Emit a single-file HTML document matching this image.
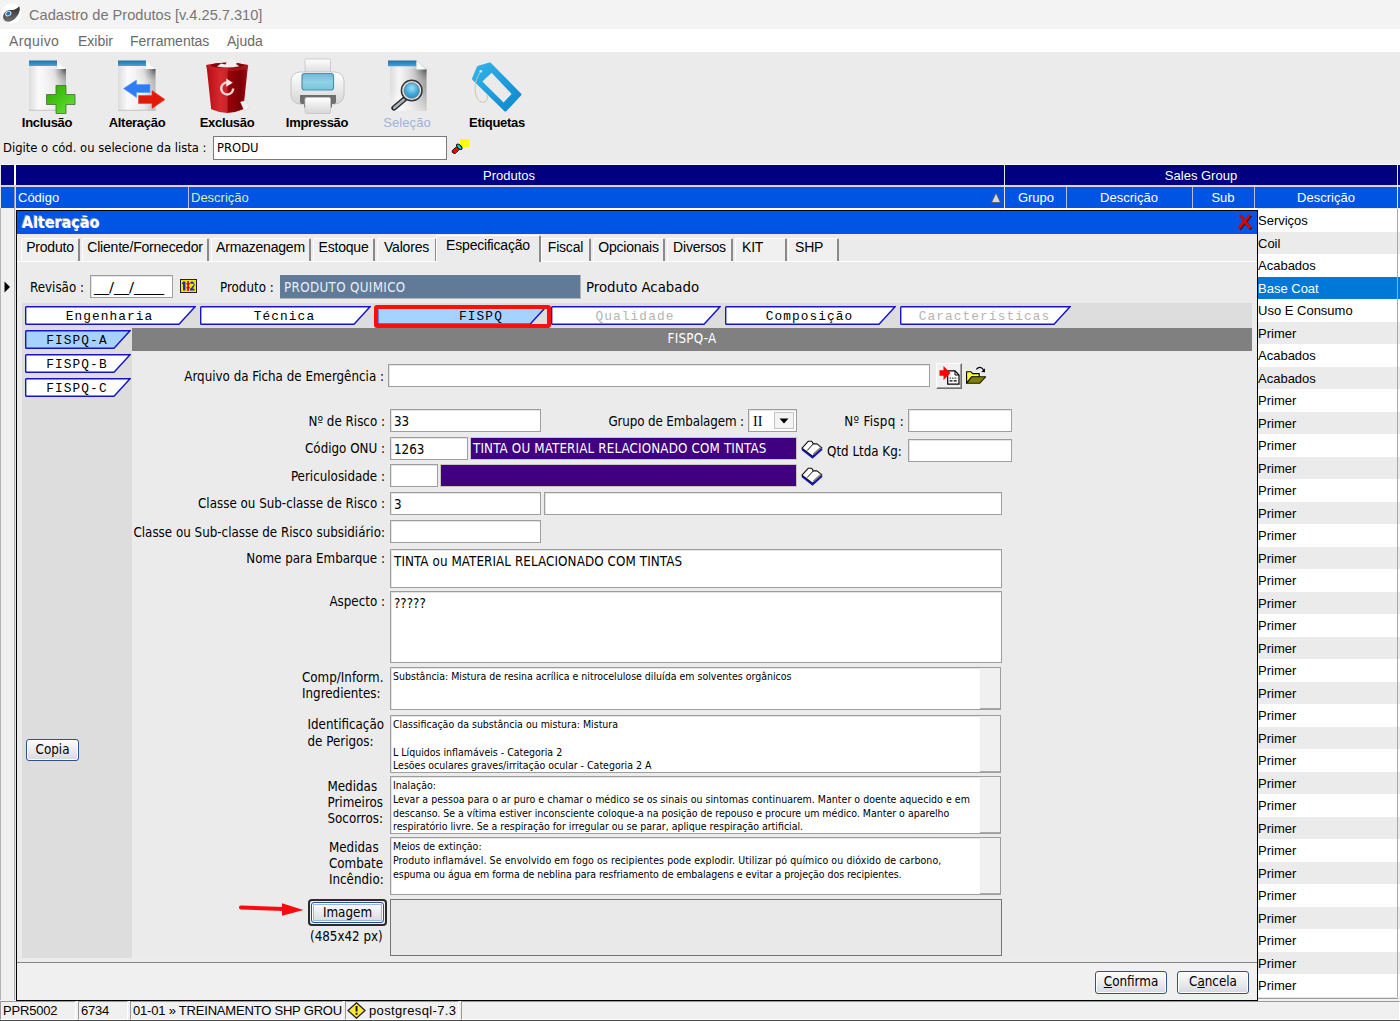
<!DOCTYPE html>
<html lang="pt-BR">
<head>
<meta charset="utf-8">
<title>Cadastro de Produtos</title>
<style>
*{box-sizing:border-box;margin:0;padding:0}
html,body{width:1400px;height:1021px;overflow:hidden;background:#ebebeb}
body{position:relative;font-family:"Liberation Sans",sans-serif;font-size:14px;color:#000}
.a{position:absolute;white-space:nowrap}
.th{font-family:"DejaVu Sans Condensed","DejaVu Sans","Liberation Sans",sans-serif;font-stretch:condensed;font-size:12.9px}
/* title + menu */
#title{left:0;top:0;width:1400px;height:29px;background:#f3f3f3}
#title span{left:29px;top:6px;font-size:14.6px;color:#767676;line-height:19px}
#menu{left:0;top:29px;width:1400px;height:23px;background:#fff}
#menu span{top:3px;font-size:14px;color:#6a6a6a;line-height:19px}
/* toolbar */
#tb{left:0;top:52px;width:1400px;height:113px;background:#ebebeb}
.tl{top:63px;font-weight:bold;font-size:13px;line-height:16px;transform:translateX(-50%);letter-spacing:-0.3px}
/* grid */
.nav{background:#000080;color:#fff}
.blu{background:#0054e3;color:#fff}
.gh{font-size:13px;line-height:16px;color:#fff}
.row{left:1258px;width:142px;height:23px;font-size:13px;line-height:24px;padding-left:0}
#dlg{left:16px;top:210px;width:1242px;height:791px;background:#ebebeb;border:1px solid #000}
.tf{font-family:"DejaVu Sans Condensed","DejaVu Sans","Liberation Sans",sans-serif;font-stretch:condensed}
#dlgi{left:1px;top:0;width:1239px;height:789px}
.tab{top:27px;height:23px;font-size:14px;line-height:16px;text-align:center;background:#f0f0f0;border-left:1px solid #fff;border-top:1px solid #fff;border-right:2px solid #8a8a8a;border-radius:2px 2px 0 0;letter-spacing:-0.2px}
.tab.sel{top:24px;height:27px;line-height:18px;background:#ebebeb;z-index:2}
.mt{font-family:"Liberation Mono","DejaVu Sans Mono",monospace;font-size:13px;line-height:16px;text-align:center;color:#000}
.lb{font-family:"DejaVu Sans Condensed","DejaVu Sans","Liberation Sans",sans-serif;font-stretch:condensed;font-size:13.25px;line-height:16px;text-align:right;margin-top:1px;margin-right:1px}
.in{background:#fff;border:1px solid #9e9e9e;box-shadow:inset 1px 1px 0 #e4e4e4;font-family:"DejaVu Sans Condensed","DejaVu Sans","Liberation Sans",sans-serif;font-stretch:condensed;font-size:13.3px;line-height:16px;padding:4px 0 0 3px;overflow:hidden}
.ta{font-size:10.5px;line-height:13.8px;padding:2px 0 0 2px;white-space:pre}
.sb{right:0;top:0;bottom:0;width:20px;background:#f0f0f0;border-bottom:1px solid #a8a8a8}
.btn{border:1px solid #2f528f;border-radius:3px;background:linear-gradient(#fdfdfd,#e9eaee 55%,#d6d9e2);font-family:"DejaVu Sans Condensed","DejaVu Sans","Liberation Sans",sans-serif;font-stretch:condensed;font-size:13.3px;line-height:19px;text-align:center;box-shadow:inset 0 0 0 1px #fff}
</style>
</head>
<body>
<!-- TITLE BAR -->
<div id="title" class="a">
<svg class="a" style="left:0;top:0" width="26" height="29" viewBox="0 0 26 29"><defs><linearGradient id="sw" x1="0" y1="0" x2="0" y2="1"><stop offset="0" stop-color="#2e2e2e"/><stop offset="1" stop-color="#707070"/></linearGradient></defs><ellipse cx="11.5" cy="13.5" rx="9.6" ry="10.2" fill="#fff"/><path d="M3.2 18 C2.4 13.2, 7 9.2, 11 10 C14.5 10.4, 17.5 8.2, 19 6.2 C20.8 8.500, 19.5 14, 15.400 18.200 C11.400 22.600, 4.200 23.200, 3.200 18 Z" fill="url(#sw)"/><ellipse cx="8.300" cy="13.600" rx="3.300" ry="2.500" transform="rotate(-30 8.300 13.600)" fill="#e8eef4"/><ellipse cx="8.300" cy="13.600" rx="2.300" ry="1.700" transform="rotate(-30 8.300 13.600)" fill="#1672c8"/></svg>
<span class="a">Cadastro de Produtos [v.4.25.7.310]</span>
</div>
<!-- MENU -->
<div id="menu" class="a">
<span class="a" style="left:9px;letter-spacing:0.4px">Arquivo</span>
<span class="a" style="left:78px">Exibir</span>
<span class="a" style="left:130px">Ferramentas</span>
<span class="a" style="left:227px">Ajuda</span>
</div>
<!-- TOOLBAR -->
<div id="tb" class="a">
<svg class="a" style="left:0;top:0" width="560" height="70" viewBox="0 52 560 70">
<defs>
<linearGradient id="gd" x1="0" y1="0" x2="1" y2="0"><stop offset="0" stop-color="#dcdcdc"/><stop offset="0.25" stop-color="#fafafa"/><stop offset="0.7" stop-color="#ececec"/><stop offset="1" stop-color="#b9b9b9"/></linearGradient>
<linearGradient id="gd2" x1="0" y1="0" x2="1" y2="0"><stop offset="0" stop-color="#dcdcdc"/><stop offset="0.25" stop-color="#f6f6f6"/><stop offset="0.6" stop-color="#dadada"/><stop offset="1" stop-color="#a2a2a2"/></linearGradient><linearGradient id="gw" x1="0" y1="0" x2="0" y2="1"><stop offset="0.45" stop-color="#fff" stop-opacity="0"/><stop offset="1" stop-color="#fff" stop-opacity="0.55"/></linearGradient>
<radialGradient id="gs" cx="1" cy="0" r="1"><stop offset="0" stop-color="#303030" stop-opacity="0.8"/><stop offset="0.3" stop-color="#5a5a5a" stop-opacity="0.38"/><stop offset="0.6" stop-color="#808080" stop-opacity="0.1"/><stop offset="1" stop-color="#8a8a8a" stop-opacity="0"/></radialGradient><linearGradient id="gb" x1="0" y1="0" x2="0" y2="1"><stop offset="0" stop-color="#1f6fa5"/><stop offset="1" stop-color="#4aa3d6"/></linearGradient>
<linearGradient id="gg" x1="0" y1="0" x2="1" y2="1"><stop offset="0" stop-color="#2aa800"/><stop offset="0.5" stop-color="#46c818"/><stop offset="1" stop-color="#6ee040"/></linearGradient>
<linearGradient id="gr" x1="0" y1="0" x2="1" y2="0"><stop offset="0" stop-color="#a80c14"/><stop offset="0.1" stop-color="#c4141c"/><stop offset="0.34" stop-color="#d62a30"/><stop offset="0.49" stop-color="#c4242a"/><stop offset="0.53" stop-color="#9a0209"/><stop offset="0.8" stop-color="#7a0105"/><stop offset="0.93" stop-color="#8e060c"/><stop offset="1" stop-color="#b01c22"/></linearGradient>
<linearGradient id="gp" x1="0" y1="0" x2="0" y2="1"><stop offset="0" stop-color="#ffffff"/><stop offset="1" stop-color="#d6d6d6"/></linearGradient>
<linearGradient id="gpb" x1="0" y1="0" x2="0" y2="1"><stop offset="0" stop-color="#6fb6d2"/><stop offset="0.5" stop-color="#8fd3e6"/><stop offset="1" stop-color="#7ac3da"/></linearGradient>
<radialGradient id="gl" cx="0.5" cy="0.35" r="0.7"><stop offset="0" stop-color="#9fe0f6"/><stop offset="0.6" stop-color="#3fa7d8"/><stop offset="1" stop-color="#2b86bd"/></radialGradient>
<linearGradient id="gt" x1="0" y1="0" x2="1" y2="1"><stop offset="0" stop-color="#35b4ea"/><stop offset="1" stop-color="#0a86cc"/></linearGradient>
</defs>
<!-- Inclusao -->
<g>
<path d="M29 61 H57 L66 69 V111 H29 Z" fill="url(#gd)"/><rect x="44" y="69" width="22" height="22" fill="url(#gs)"/><path d="M57 66 L57 69 L60 69 Z" fill="#9a9a9a" opacity="0.5"/><path d="M29 110.300 H66" stroke="#c4c4c4" stroke-width="1"/>
<path d="M29 60.5 H57 V66 H29 Z" fill="url(#gb)"/>
<path d="M57 61 L66 69 H57 Z" fill="#fbfbfb"/>
<path d="M56 85.5 H66 V94.5 H75 V104.5 H66 V113.5 H56 V104.5 H46.5 V94.5 H56 Z" fill="url(#gg)" stroke="#4c6a3a" stroke-width="0.8"/>
</g>
<!-- Alteracao -->
<g>
<path d="M118 61 H146 L155.500 69 V111 H118 Z" fill="url(#gd)"/><rect x="133.500" y="69" width="22" height="22" fill="url(#gs)"/><path d="M118 110.300 H155.500" stroke="#c4c4c4" stroke-width="1"/>
<path d="M118 60.5 H146 V66 H118 Z" fill="url(#gb)"/>
<path d="M146 61 L155.500 69 H146 Z" fill="#fbfbfb"/>
<path d="M123.5 88.5 L136.5 80 V84.5 H150 V92.5 H136.5 V97.5 Z" fill="#2f7cf6" stroke="#5a98f8" stroke-width="0.6"/>
<path d="M165 99.5 L152 90.5 V95.5 H138.5 V103.5 H152 V108.5 Z" fill="#e21a0a" stroke="#e8442e" stroke-width="0.6"/>
</g>
<!-- Exclusao -->
<g>
<path d="M206.500 65.500 Q227 60.500 248 65.500 L243.300 109.300 Q227 116.500 211.200 109.300 Z" fill="url(#gr)"/>
<path d="M206.300 65 Q227 59.800 248.200 65 L247.600 68.800 Q227 73.500 207 68.800 Z" fill="#c9242c"/>
<path d="M206.300 65 Q227 59.800 248.200 65 L247.600 68.800 Q227 73.500 207 68.800 Z" fill="url(#gr)" opacity="0.55"/>
<ellipse cx="227.200" cy="65.300" rx="16.500" ry="2.600" fill="#7e060c"/>
<path d="M217 66.600 L221 63.500 L225.500 64.500 L227.500 60.500 L232 58.800 L236 60.500 L236.500 64.500 L239.500 66.300 Q228 68.500 217 66.600 Z" fill="#f0f0f0"/>
<path d="M233.200 88.500 A6 6 0 1 1 227.200 82.500" fill="none" stroke="#f7d5d5" stroke-width="2.400"/>
<path d="M226.300 78.500 L232.800 82.800 L226.300 86.800 Z" fill="#fbe9e9"/>
<path d="M240.500 102 L246 100.500 L249.500 108.500 L244.500 111 Z" fill="#f1f1f1" stroke="#d4d4d4" stroke-width="0.500"/>
</g>
<!-- Impressao -->
<g>
<rect x="305" y="59" width="25.5" height="16" rx="1.5" fill="url(#gp)" stroke="#c4c4c4" stroke-width="0.8"/>
<rect x="291" y="72" width="53" height="32" rx="9" fill="url(#gp)" stroke="#bdbdbd" stroke-width="0.8"/>
<rect x="302" y="73.5" width="31.5" height="16.5" rx="2.5" fill="url(#gpb)" stroke="#4f8fb0" stroke-width="1.2"/>
<path d="M300 95 H336 V102 Q336 104 334 104 H332 V107.5 H304 V104 H302 Q300 104 300 102 Z" fill="#6e6e6e"/>
<rect x="305" y="97.5" width="25.5" height="16" rx="1.5" fill="url(#gp)" stroke="#c4c4c4" stroke-width="0.8"/>
</g>
<!-- Selecao -->
<g>
<path d="M390 61 H417 L426.500 69 V110.500 H390 Z" fill="url(#gd2)"/>
<rect x="390" y="69" width="36.500" height="41.500" fill="url(#gw)"/><rect x="404.500" y="69" width="22" height="22" fill="url(#gs)"/>
<path d="M388 60.500 H416.500 V66.300 H388 Z" fill="url(#gb)"/>
<path d="M416.500 61 L426.500 69.500 H416.500 Z" fill="#fafafa"/>
<path d="M404.300 99.300 L394 108" stroke="#2a2a2a" stroke-width="5.400" stroke-linecap="round"/>
<path d="M403.800 99.800 L394.300 107.800" stroke="#a9b4bd" stroke-width="2.600" stroke-linecap="round"/>
<circle cx="411.700" cy="90.500" r="10.300" fill="#dfe7ec" stroke="#353535" stroke-width="1.500"/>
<circle cx="411.700" cy="90.500" r="7.700" fill="url(#gl)" stroke="#6d7a83" stroke-width="0.800"/>
</g>
<!-- Etiquetas -->
<g>
<path d="M489.300 62.600 Q490.300 62.200 491.200 63.200 L521 93.400 Q522 94.500 521 95.600 L506.500 111 Q505.300 112.200 504.200 111 L472.600 80 Q471.800 79 472.300 77.800 L476.800 67 Q477.300 66 478.300 65.700 Z" fill="url(#gt)"/>
<path d="M491.600 72.700 L511.600 93.900 L503.600 102.400 L482.400 81.500 Z" fill="#ebebeb"/>
<path d="M480.700 71.600 Q475 79 475 89.300 Q476 101.500 482.400 102.400 Q488.500 102.600 487.300 94.500" fill="none" stroke="#cfc8a8" stroke-width="1"/>
<circle cx="480.800" cy="71.300" r="1.300" fill="#d7eef9"/>
</g>
</svg>

<span class="a tl" style="left:47px">Inclusão</span>
<span class="a tl" style="left:137px">Alteração</span>
<span class="a tl" style="left:227px">Exclusão</span>
<span class="a tl" style="left:317px">Impressão</span>
<span class="a tl" style="left:407px;color:#9db4d6;font-weight:normal;letter-spacing:0.1px">Seleção</span>
<span class="a tl" style="left:497px">Etiquetas</span>
<svg class="a" style="left:450px;top:85px" width="22" height="20" viewBox="450 137 22 20"><rect x="460" y="139" width="9" height="8" fill="#ffff00"/><path d="M462 141h1v1h-1zM465 141h1v1h-1zM463.5 143.500h1v1h-1zM466.500 144h1v1h-1zM461.500 145h1v1h-1z" fill="#e8e060"/><path d="M453 149.800 L457.500 146 L460.200 148.600 L455.500 153.200 Q453.500 154 452.300 152.300 Q451.800 150.800 453 149.800 Z" fill="#ff0000" stroke="#000" stroke-width="0.9"/><ellipse cx="459.300" cy="146.800" rx="1.700" ry="3.300" transform="rotate(-45 459.300 146.800)" fill="#00e0e0" stroke="#000" stroke-width="1"/></svg>
<span class="a th" style="left:3px;top:88px;line-height:16px">Digite o cód. ou selecione da lista :</span>
<div class="a" style="left:213px;top:84px;width:234px;height:24px;background:#fff;border:1px solid #7a7a7a"><span class="a th" style="left:3px;top:3px;line-height:16px">PRODU</span></div>
</div>
<div class="a" style="left:0;top:164px;width:1400px;height:1px;background:#fafafa"></div>
<!-- GRID HEADERS -->
<div class="a nav" style="left:0;top:165px;width:1400px;height:20px"></div>
<div class="a" style="left:14px;top:165px;width:2px;height:20px;background:#fff"></div><div class="a" style="left:14px;top:187px;width:1px;height:21px;background:#9a9a9a;z-index:1"></div><div class="a" style="left:15px;top:187px;width:1px;height:21px;background:#d8d8d8;z-index:1"></div><div class="a" style="left:0;top:165px;width:1px;height:43px;background:#e8e8e8;z-index:1"></div>
<div class="a blu" style="left:0;top:187px;width:1400px;height:21px"></div>
<div class="a" style="left:16px;top:208px;width:1242px;height:2px;background:#fff"></div>
<div class="a" style="left:0;top:185px;width:1400px;height:2px;background:#d6d6d6"></div>
<div class="a" style="left:1004px;top:165px;width:1px;height:44px;background:#dfe6f5"></div>
<div class="a" style="left:1397px;top:165px;width:1px;height:44px;background:#dfe6f5"></div>
<div class="a" style="left:188px;top:187px;width:1px;height:21px;background:#b4bcd8"></div>
<div class="a" style="left:1066px;top:187px;width:1px;height:21px;background:#b4bcd8"></div>
<div class="a" style="left:1192px;top:187px;width:1px;height:21px;background:#b4bcd8"></div>
<div class="a" style="left:1254px;top:187px;width:1px;height:21px;background:#b4bcd8"></div>
<span class="a gh" style="left:509px;top:168px;transform:translateX(-50%)">Produtos</span>
<span class="a gh" style="left:1201px;top:168px;transform:translateX(-50%)">Sales Group</span>
<span class="a gh" style="left:18px;top:190px">Código</span>
<span class="a gh" style="left:191px;top:190px;color:#d6f29a">Descrição</span>
<span class="a gh" style="left:1036px;top:190px;transform:translateX(-50%)">Grupo</span>
<span class="a gh" style="left:1129px;top:190px;transform:translateX(-50%)">Descrição</span>
<span class="a gh" style="left:1223px;top:190px;transform:translateX(-50%)">Sub</span>
<span class="a gh" style="left:1326px;top:190px;transform:translateX(-50%)">Descrição</span>
<svg class="a" style="left:990px;top:192px" width="12" height="12" viewBox="0 0 12 12"><path d="M6 1 L10.5 10.5 L1.5 10.5 Z" fill="#d8d8d8" stroke="#555" stroke-width="0.8"/></svg>
<!-- LEFT INDICATOR COLUMN -->
<div class="a" style="left:0;top:208px;width:16px;height:792px;background:#f0f0f0;border-left:1px solid #b4b4b4"></div><div class="a" style="left:14px;top:208px;width:1px;height:792px;background:#adadad"></div><div class="a" style="left:15px;top:208px;width:1px;height:792px;background:#e6e6e6"></div>
<svg class="a" style="left:4px;top:281px" width="7" height="12" viewBox="0 0 7 12"><path d="M0.5 0.5 L6 6 L0.5 11.5 Z" fill="#000"/></svg>
<div class="a row" style="top:209px;height:23px;background:#ffffff;color:#000">Serviços</div>
<div class="a row" style="top:232px;height:22px;background:#ebebeb;color:#000">Coil</div>
<div class="a row" style="top:254px;height:23px;background:#ffffff;color:#000">Acabados</div>
<div class="a row" style="top:277px;height:22px;background:#0078d7;color:#fff">Base Coat</div>
<div class="a row" style="top:299px;height:23px;background:#ffffff;color:#000">Uso E Consumo</div>
<div class="a row" style="top:322px;height:22px;background:#ebebeb;color:#000">Primer</div>
<div class="a row" style="top:344px;height:23px;background:#ffffff;color:#000">Acabados</div>
<div class="a row" style="top:367px;height:22px;background:#ebebeb;color:#000">Acabados</div>
<div class="a row" style="top:389px;height:23px;background:#ffffff;color:#000">Primer</div>
<div class="a row" style="top:412px;height:22px;background:#ebebeb;color:#000">Primer</div>
<div class="a row" style="top:434px;height:23px;background:#ffffff;color:#000">Primer</div>
<div class="a row" style="top:457px;height:22px;background:#ebebeb;color:#000">Primer</div>
<div class="a row" style="top:479px;height:23px;background:#ffffff;color:#000">Primer</div>
<div class="a row" style="top:502px;height:22px;background:#ebebeb;color:#000">Primer</div>
<div class="a row" style="top:524px;height:23px;background:#ffffff;color:#000">Primer</div>
<div class="a row" style="top:547px;height:22px;background:#ebebeb;color:#000">Primer</div>
<div class="a row" style="top:569px;height:23px;background:#ffffff;color:#000">Primer</div>
<div class="a row" style="top:592px;height:22px;background:#ebebeb;color:#000">Primer</div>
<div class="a row" style="top:614px;height:23px;background:#ffffff;color:#000">Primer</div>
<div class="a row" style="top:637px;height:22px;background:#ebebeb;color:#000">Primer</div>
<div class="a row" style="top:659px;height:23px;background:#ffffff;color:#000">Primer</div>
<div class="a row" style="top:682px;height:22px;background:#ebebeb;color:#000">Primer</div>
<div class="a row" style="top:704px;height:23px;background:#ffffff;color:#000">Primer</div>
<div class="a row" style="top:727px;height:22px;background:#ebebeb;color:#000">Primer</div>
<div class="a row" style="top:749px;height:23px;background:#ffffff;color:#000">Primer</div>
<div class="a row" style="top:772px;height:22px;background:#ebebeb;color:#000">Primer</div>
<div class="a row" style="top:794px;height:23px;background:#ffffff;color:#000">Primer</div>
<div class="a row" style="top:817px;height:22px;background:#ebebeb;color:#000">Primer</div>
<div class="a row" style="top:839px;height:23px;background:#ffffff;color:#000">Primer</div>
<div class="a row" style="top:862px;height:22px;background:#ebebeb;color:#000">Primer</div>
<div class="a row" style="top:884px;height:23px;background:#ffffff;color:#000">Primer</div>
<div class="a row" style="top:907px;height:22px;background:#ebebeb;color:#000">Primer</div>
<div class="a row" style="top:929px;height:23px;background:#ffffff;color:#000">Primer</div>
<div class="a row" style="top:952px;height:22px;background:#ebebeb;color:#000">Primer</div>
<div class="a row" style="top:974px;height:23px;background:#ffffff;color:#000">Primer</div>
<div class="a" style="left:1397px;top:209px;width:1px;height:790px;background:#a8a8a8"></div>

<div id="dlg" class="a"><div id="dlgi" class="a">
<!-- title (coords inside dlg are abs-18 x, abs-211 y) -->
<div class="a" style="left:-1px;top:0;width:1240px;height:23px;background:#0055e5"></div>
<span class="a tf" style="left:4px;top:2px;font-size:16px;font-weight:bold;line-height:20px;color:#fff;text-shadow:-1px -1px 0 #a4a4a4;">Alteração</span>
<svg class="a" style="left:1218px;top:2px" width="17" height="17" viewBox="0 0 17 17"><path d="M3.500 3 L6 2.500 L9.700 7.300 L14 2 L16 3.500 L11.500 9.300 L16.500 15.500 L14 17 L9.500 11.500 L5 17 L2.500 15.500 L7.800 9.200 Z" fill="#5c0604"/><path d="M2.500 2 L5 1.500 L8.700 6.300 L13 1 L15 2.500 L10.500 8.300 L15.500 14.500 L13 16 L8.500 10.500 L4 16 L1.500 14.500 L6.800 8.200 Z" fill="#cc0c08"/></svg>
<div class="a tab" style="left:3px;width:59px">Produto</div>
<div class="a tab" style="left:64px;width:127px">Cliente/Fornecedor</div>
<div class="a tab" style="left:193px;width:100px">Armazenagem</div>
<div class="a tab" style="left:295px;width:62px">Estoque</div>
<div class="a tab" style="left:359px;width:60px">Valores</div>
<div class="a tab sel" style="left:418px;width:105px">Especificação</div>
<div class="a tab" style="left:523px;width:50px">Fiscal</div>
<div class="a tab" style="left:575px;width:72px">Opcionais</div>
<div class="a tab" style="left:649px;width:66px">Diversos</div>
<div class="a tab" style="left:717px;width:52px;text-align:left;padding-left:6px">KIT</div>
<div class="a tab" style="left:770px;width:51px;text-align:left;padding-left:6px">SHP</div>
<div class="a" style="left:-1px;top:50px;width:1240px;height:1px;background:#fff"></div>
<span class="a lb" style="left:12px;top:68px;text-align:left;">Revisão :</span>
<div class="a in" style="left:72px;top:64px;width:83px;height:23px"><span style="display:inline-block;transform:scaleX(1.25);transform-origin:0 50%">__/__/____</span></div>
<svg class="a" style="left:162px;top:68px" width="17" height="14" viewBox="0 0 17 14"><rect x="0" y="0" width="17" height="14" fill="#222"/><rect x="1" y="1" width="15" height="12" fill="#f2e600"/><rect x="3" y="2.5" width="2.4" height="9" fill="#1a2ad0"/><rect x="2" y="3.5" width="2" height="1.6" fill="#1a2ad0"/><path d="M10 4.5 Q10 2.5 12 2.5 Q14 2.5 14 4.5 Q14 6 11.5 8.5 L10 10 V11.5 H14.5 V9.8 H12.6 Q14.8 7.6 14.8 4.8" fill="#1a2ad0"/><rect x="7.2" y="2" width="1.8" height="10" fill="#d01010"/><rect x="6.4" y="4" width="3.4" height="1.5" fill="#d01010"/><rect x="6.4" y="8" width="3.4" height="1.5" fill="#d01010"/></svg>
<span class="a lb" style="left:202px;top:68px;text-align:left;">Produto :</span>
<div class="a" style="left:262px;top:64px;width:301px;height:24px;background:#607a98;border-right:1px solid #b4b4b4;border-bottom:1px solid #b4b4b4"><span class="a lb" style="left:4px;top:4px;color:#e9eff6;letter-spacing:0.35px">PRODUTO QUIMICO</span></div>
<span class="a lb" style="left:568px;top:67px;text-align:left;font-size:14.8px">Produto Acabado</span>
<div class="a" style="left:4px;top:92px;width:1230px;height:25px;background:#dddddd"></div>
<div class="a" style="left:4px;top:117px;width:110px;height:630px;background:#dddddd"></div>
<div class="a" style="left:114px;top:117px;width:1120px;height:23px;background:#808080"><span class="a tf" style="left:0;width:100%;top:3px;text-align:center;font-size:13.3px;line-height:16px;color:#fff;letter-spacing:0.25px">FISPQ-A</span></div>
<svg class="a" style="left:7px;top:95px" width="171" height="19" viewBox="0 0 171 19"><path d="M1.5 0.7 H170 L154 18.3 H1.5 Q0.7 18.3 0.7 17.5 V1.5 Q0.7 0.7 1.5 0.7 Z" fill="#fff" stroke="#1414c8" stroke-width="1.4"/><text x="84.5" y="13.8" text-anchor="middle" font-family="Liberation Mono, DejaVu Sans Mono, monospace" font-size="12.8" letter-spacing="1.08" fill="#000">Engenharia</text></svg>
<svg class="a" style="left:182px;top:95px" width="171" height="19" viewBox="0 0 171 19"><path d="M1.5 0.7 H170 L154 18.3 H1.5 Q0.7 18.3 0.7 17.5 V1.5 Q0.7 0.7 1.5 0.7 Z" fill="#fff" stroke="#1414c8" stroke-width="1.4"/><text x="84.5" y="13.8" text-anchor="middle" font-family="Liberation Mono, DejaVu Sans Mono, monospace" font-size="12.8" letter-spacing="1.08" fill="#000">Técnica</text></svg>
<svg class="a" style="left:359px;top:95px" width="170" height="19" viewBox="0 0 170 19"><path d="M1.5 0.7 H169 L153 18.3 H1.5 Q0.7 18.3 0.7 17.5 V1.5 Q0.7 0.7 1.5 0.7 Z" fill="#a6d2ff" stroke="#1414c8" stroke-width="1.4"/><text x="104" y="13.8" text-anchor="middle" font-family="Liberation Mono, DejaVu Sans Mono, monospace" font-size="12.8" letter-spacing="1.08" fill="#000">FISPQ</text></svg>
<div class="a" style="left:356px;top:94px;width:177px;height:23px;border:4px solid #ff0d0d;border-radius:3px"></div>
<svg class="a" style="left:533px;top:95px" width="170" height="19" viewBox="0 0 170 19"><path d="M1.5 0.7 H169 L153 18.3 H1.5 Q0.7 18.3 0.7 17.5 V1.5 Q0.7 0.7 1.5 0.7 Z" fill="#fff" stroke="#1414c8" stroke-width="1.4"/><text x="84.0" y="13.8" text-anchor="middle" font-family="Liberation Mono, DejaVu Sans Mono, monospace" font-size="12.8" letter-spacing="1.08" fill="#b4b4b4">Qualidade</text></svg>
<svg class="a" style="left:707px;top:95px" width="171" height="19" viewBox="0 0 171 19"><path d="M1.5 0.7 H170 L154 18.3 H1.5 Q0.7 18.3 0.7 17.5 V1.5 Q0.7 0.7 1.5 0.7 Z" fill="#fff" stroke="#1414c8" stroke-width="1.4"/><text x="84.5" y="13.8" text-anchor="middle" font-family="Liberation Mono, DejaVu Sans Mono, monospace" font-size="12.8" letter-spacing="1.08" fill="#000">Composição</text></svg>
<svg class="a" style="left:882px;top:95px" width="171" height="19" viewBox="0 0 171 19"><path d="M1.5 0.7 H170 L154 18.3 H1.5 Q0.7 18.3 0.7 17.5 V1.5 Q0.7 0.7 1.5 0.7 Z" fill="#fff" stroke="#1414c8" stroke-width="1.4"/><text x="84.5" y="13.8" text-anchor="middle" font-family="Liberation Mono, DejaVu Sans Mono, monospace" font-size="12.8" letter-spacing="1.08" fill="#b4b4b4">Características</text></svg>
<svg class="a" style="left:7px;top:119px" width="106" height="19" viewBox="0 0 106 19"><path d="M1.5 0.7 H105 L89 18.3 H1.5 Q0.7 18.3 0.7 17.5 V1.5 Q0.7 0.7 1.5 0.7 Z" fill="#a6d2ff" stroke="#1414c8" stroke-width="1.4"/><text x="52.0" y="13.8" text-anchor="middle" font-family="Liberation Mono, DejaVu Sans Mono, monospace" font-size="12.8" letter-spacing="1.08" fill="#000">FISPQ-A</text></svg>
<svg class="a" style="left:7px;top:143px" width="106" height="19" viewBox="0 0 106 19"><path d="M1.5 0.7 H105 L89 18.3 H1.5 Q0.7 18.3 0.7 17.5 V1.5 Q0.7 0.7 1.5 0.7 Z" fill="#fff" stroke="#1414c8" stroke-width="1.4"/><text x="52.0" y="13.8" text-anchor="middle" font-family="Liberation Mono, DejaVu Sans Mono, monospace" font-size="12.8" letter-spacing="1.08" fill="#000">FISPQ-B</text></svg>
<svg class="a" style="left:7px;top:167px" width="106" height="19" viewBox="0 0 106 19"><path d="M1.5 0.7 H105 L89 18.3 H1.5 Q0.7 18.3 0.7 17.5 V1.5 Q0.7 0.7 1.5 0.7 Z" fill="#fff" stroke="#1414c8" stroke-width="1.4"/><text x="52.0" y="13.8" text-anchor="middle" font-family="Liberation Mono, DejaVu Sans Mono, monospace" font-size="12.8" letter-spacing="1.08" fill="#000">FISPQ-C</text></svg>
<div class="a btn" style="left:8px;top:528px;width:53px;height:22px">Copia</div>
<span class="a lb" style="right:872px;top:157px;">Arquivo da Ficha de Emergência :</span>
<div class="a in" style="left:370px;top:153px;width:542px;height:23px;"></div>
<div class="a" style="left:918px;top:152px;width:26px;height:26px;background:#f0f0f0;border:1px solid #fff;border-right-color:#707070;border-bottom-color:#707070;box-shadow:inset -1px -1px 0 #a0a0a0"><svg class="a" style="left:0;top:0" width="24" height="24" viewBox="937 364 24 24"><path d="M947.700 370.800 H955 L959 375 V384.200 H947.700 Z" fill="#fff" stroke="#000" stroke-width="1.200"/><path d="M955 370.800 V375 H959" fill="none" stroke="#000" stroke-width="1"/><path d="M949.500 378.200 H957.300" stroke="#555" stroke-width="1.300" stroke-dasharray="1.600 0.800"/><path d="M949.500 380.900 H957.300" stroke="#000" stroke-width="1.300" stroke-dasharray="3 1.200"/><path d="M939.500 370.300 H943.500 V366 L950.500 373 L943.500 380 V375.700 H939.500 Z" fill="#ff0000"/></svg></div>
<svg class="a" style="left:947px;top:154px" width="23" height="21" viewBox="965 365 23 21"><path d="M976.300 369.300 Q980 365.300 983.600 369.800" fill="none" stroke="#000" stroke-width="1.200"/><path d="M981.300 371.900 L985 372.300 L984.900 368.300 Z" fill="#000"/><path d="M966.600 383.200 V371.800 H971 L972.600 373.600 H979.200 V377 H971.500 Z" fill="#ffff3a" stroke="#000" stroke-width="1.100" stroke-linejoin="round"/><path d="M966.600 383.300 L971.600 376.800 H985.600 L979.600 383.300 Z" fill="#808000" stroke="#1a1a00" stroke-width="1.100" stroke-linejoin="round"/></svg>
<span class="a lb" style="right:871px;top:202px;">Nº de Risco :</span>
<div class="a in" style="left:372px;top:198px;width:151px;height:23px;">33</div>
<span class="a lb" style="right:512px;top:202px;;letter-spacing:-0.12px">Grupo de Embalagem :</span>
<div class="a in" style="left:730px;top:198px;width:49px;height:23px;padding-left:4px"><span style="font-family:'Liberation Serif',serif;font-size:14px">II</span></div>
<div class="a" style="left:756px;top:201px;width:20px;height:17px;background:#f4f4f4;border:1px solid #c4c4c4"><svg class="a" style="left:4px;top:5px" width="10" height="6" viewBox="0 0 10 6"><path d="M0.5 0.5 H9.5 L5 5.5 Z" fill="#000"/></svg></div>
<span class="a lb" style="right:352px;top:202px;;letter-spacing:0.3px">Nº Fispq :</span>
<div class="a in" style="left:890px;top:198px;width:104px;height:23px;"></div>
<span class="a lb" style="right:871px;top:229px;">Código ONU :</span>
<div class="a in" style="left:372px;top:226px;width:78px;height:23px;">1263</div>
<div class="a" style="left:452px;top:226px;width:327px;height:23px;background:#400080;border:1px solid #c6c6c6"><span class="a lb" style="left:2px;top:2px;color:#fff;letter-spacing:0.16px">TINTA OU MATERIAL RELACIONADO COM TINTAS</span></div>
<svg class="a" style="left:783px;top:229px" width="22" height="19" viewBox="0 0 22 19"><path d="M1 9.300 L11.500 17.400 L20.900 9" fill="none" stroke="#1010ff" stroke-width="2"/><path d="M1 8.200 L7.400 1.200 H10.700 L12.300 3.900 H16 L20.900 7.900 L11.500 16.300 Z" fill="#fff" stroke="#111" stroke-width="1.100" stroke-linejoin="round"/><path d="M12.300 3.900 L6.100 10.600" stroke="#111" stroke-width="1"/><path d="M12.300 14.300 L19.800 7.600" stroke="#808080" stroke-width="1.700"/></svg>
<span class="a lb" style="left:809px;top:232px;text-align:left;">Qtd Ltda Kg:</span>
<div class="a in" style="left:890px;top:228px;width:104px;height:23px;"></div>
<span class="a lb" style="right:871px;top:257px;">Periculosidade :</span>
<div class="a in" style="left:372px;top:253px;width:48px;height:23px;"></div>
<div class="a" style="left:422px;top:253px;width:357px;height:23px;background:#400080;border:1px solid #c6c6c6"></div>
<svg class="a" style="left:783px;top:256px" width="22" height="19" viewBox="0 0 22 19"><path d="M1 9.300 L11.500 17.400 L20.900 9" fill="none" stroke="#1010ff" stroke-width="2"/><path d="M1 8.200 L7.400 1.200 H10.700 L12.300 3.900 H16 L20.900 7.900 L11.500 16.300 Z" fill="#fff" stroke="#111" stroke-width="1.100" stroke-linejoin="round"/><path d="M12.300 3.900 L6.100 10.600" stroke="#111" stroke-width="1"/><path d="M12.300 14.300 L19.800 7.600" stroke="#808080" stroke-width="1.700"/></svg>
<span class="a lb" style="right:871px;top:284px;">Classe ou Sub-classe de Risco :</span>
<div class="a in" style="left:372px;top:281px;width:151px;height:23px;">3</div>
<div class="a in" style="left:526px;top:281px;width:458px;height:23px;"></div>
<span class="a lb" style="right:871px;top:313px;">Classe ou Sub-classe de Risco subsidiário:</span>
<div class="a in" style="left:372px;top:309px;width:151px;height:23px;"></div>
<span class="a lb" style="right:871px;top:339px;">Nome para Embarque :</span>
<div class="a in" style="left:372px;top:338px;width:612px;height:39px;padding-top:4px;letter-spacing:0.08px">TINTA ou MATERIAL RELACIONADO COM TINTAS</div>
<span class="a lb" style="right:871px;top:382px;">Aspecto :</span>
<div class="a in" style="left:372px;top:380px;width:612px;height:72px;padding-top:4px">?????</div>
<span class="a lb" style="left:284px;top:458px;text-align:left">Comp/Inform.</span>
<span class="a lb" style="left:284px;top:474px;text-align:left">Ingredientes:</span>
<div class="a in ta" style="left:372px;top:456px;width:611px;height:43px">Substância: Mistura de resina acrílica e nitrocelulose diluída em solventes orgânicos<div class="a sb"></div></div>
<span class="a lb" style="left:289.5px;top:505px;text-align:left">Identificação</span>
<span class="a lb" style="left:289.5px;top:522px;text-align:left">de Perigos:</span>
<div class="a in ta" style="left:372px;top:504px;width:611px;height:58px">Classificação da substância ou mistura: Mistura

L Líquidos inflamáveis - Categoria 2
Lesões oculares graves/irritação ocular - Categoria 2 A<div class="a sb"></div></div>
<span class="a lb" style="left:309.5px;top:567px;text-align:left">Medidas</span>
<span class="a lb" style="left:309.5px;top:583px;text-align:left">Primeiros</span>
<span class="a lb" style="left:309.5px;top:599px;text-align:left">Socorros:</span>
<div class="a in ta" style="left:372px;top:565px;width:611px;height:58px">Inalação:
<span style="letter-spacing:0.03px">Levar a pessoa para o ar puro e chamar o médico se os sinais ou sintomas continuarem. Manter o doente aquecido e em</span>
descanso. Se a vítima estiver inconsciente coloque-a na posição de repouso e procure um médico. Manter o aparelho
respiratório livre. Se a respiração for irregular ou se parar, aplique respiração artificial.<div class="a sb"></div></div>
<span class="a lb" style="left:311px;top:628px;text-align:left">Medidas</span>
<span class="a lb" style="left:311px;top:644px;text-align:left">Combate</span>
<span class="a lb" style="left:311px;top:660px;text-align:left">Incêndio:</span>
<div class="a in ta" style="left:372px;top:626px;width:611px;height:58px">Meios de extinção:
<span style="letter-spacing:0.09px">Produto inflamável. Se envolvido em fogo os recipientes pode explodir. Utilizar pó químico ou dióxido de carbono,</span>
<span style="letter-spacing:-0.05px">espuma ou água em forma de neblina para resfriamento de embalagens e evitar a projeção dos recipientes.</span><div class="a sb"></div></div>
<div class="a" style="left:372px;top:688px;width:612px;height:57px;background:#e9e9e9;border:1px solid #747474"></div>
<svg class="a" style="left:220px;top:689px" width="68" height="18" viewBox="0 0 68 18"><path d="M3 7.4 L46 9" stroke="#fa0a10" stroke-width="4" stroke-linecap="round"/><path d="M44 3.2 L65.500 10 L44 15.800 Z" fill="#fa0a10"/></svg>
<div class="a" style="left:290px;top:688px;width:79px;height:27px;border:2px solid #2a2a2a;border-radius:4px;background:#ececec"></div>
<div class="a btn" style="left:293px;top:691px;width:73px;height:21px;border-color:#2e4f8f;box-shadow:inset 0 0 0 1px #fff, inset 0 0 0 2px #9ab6e8">Imagem</div>
<span class="a lb" style="left:292px;top:717px;text-align:left;">(485x42 px)</span>
<div class="a" style="left:-1px;top:747px;width:1240px;height:42px;background:#f0f0f0"></div>
<div class="a" style="left:-1px;top:751px;width:1240px;height:1px;background:#848484"></div>
<div class="a" style="left:-1px;top:747px;width:1240px;height:4px;background:#ececec"></div>
<div class="a btn" style="left:1077px;top:760px;width:72px;height:23px;line-height:20px"><u>C</u>onfirma</div>
<div class="a btn" style="left:1159px;top:760px;width:72px;height:23px;line-height:20px">C<u>a</u>ncela</div>
</div></div>

<div class="a" style="left:0;top:1001px;width:1400px;height:20px;background:#f0f0f0;border-bottom:1px solid #4a4a4a"></div><div class="a" style="left:0;top:1000px;width:16px;height:1px;background:#f0f0f0"></div><div class="a" style="left:1258px;top:1000px;width:142px;height:1px;background:#f0f0f0"></div>
<div class="a" style="left:1258px;top:997px;width:140px;height:1px;background:#e3e3e3"></div><div class="a" style="left:1258px;top:998px;width:140px;height:1px;background:#a0a0a0"></div><div class="a" style="left:1258px;top:999px;width:142px;height:1px;background:#f0f0f0"></div>
<div class="a" style="left:0px;top:1001px;width:76px;height:19px;border:1px solid #9a9a9a;border-right-color:#fff;border-bottom-color:#fff;font-size:13px;line-height:17px;padding-left:2px;overflow:hidden;letter-spacing:-0.2px">PPR5002</div>
<div class="a" style="left:78px;top:1001px;width:50px;height:19px;border:1px solid #9a9a9a;border-right-color:#fff;border-bottom-color:#fff;font-size:13px;line-height:17px;padding-left:2px;overflow:hidden;letter-spacing:-0.2px">6734</div>
<div class="a" style="left:130px;top:1001px;width:213px;height:19px;border:1px solid #9a9a9a;border-right-color:#fff;border-bottom-color:#fff;font-size:13px;line-height:17px;padding-left:2px;overflow:hidden;letter-spacing:-0.2px">01-01 » TREINAMENTO SHP GROU</div>
<div class="a" style="left:345px;top:1001px;width:114px;height:19px;border:1px solid #9a9a9a;border-right-color:#fff;border-bottom-color:#fff;font-size:13px;line-height:17px;padding-left:2px;overflow:hidden;letter-spacing:-0.2px"><svg class="a" style="left:1px;top:0px" width="19" height="17" viewBox="0 0 19 17"><path d="M9.5 0.8 L18 8.5 L9.5 16.2 L1 8.5 Z" fill="#ffe83a" stroke="#222" stroke-width="1.3"/><rect x="8.6" y="4" width="1.9" height="5.6" fill="#111"/><rect x="8.6" y="10.8" width="1.9" height="1.9" fill="#111"/></svg><span style="margin-left:21px;letter-spacing:0.35px">postgresql-7.3</span></div>
<div class="a" style="left:461px;top:1001px;width:939px;height:19px;border:1px solid #9a9a9a;border-right-color:#fff;border-bottom-color:#fff;font-size:13px;line-height:17px;padding-left:2px;overflow:hidden;letter-spacing:-0.2px"></div>
</body>
</html>
